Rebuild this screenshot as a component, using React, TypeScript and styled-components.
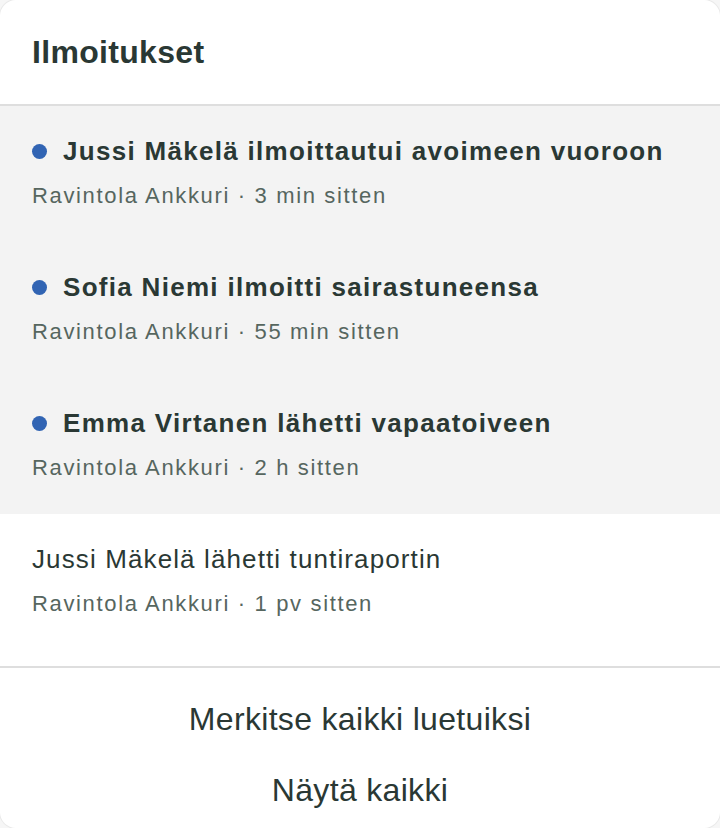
import styled, { createGlobalStyle } from "styled-components";

type Notice = {
  id: number;
  text: string;
  place: string;
  time: string;
  unread: boolean;
};

const notices: Notice[] = [
  {
    id: 1,
    text: "Jussi Mäkelä ilmoittautui avoimeen vuoroon",
    place: "Ravintola Ankkuri",
    time: "3 min sitten",
    unread: true,
  },
  {
    id: 2,
    text: "Sofia Niemi ilmoitti sairastuneensa",
    place: "Ravintola Ankkuri",
    time: "55 min sitten",
    unread: true,
  },
  {
    id: 3,
    text: "Emma Virtanen lähetti vapaatoiveen",
    place: "Ravintola Ankkuri",
    time: "2 h sitten",
    unread: true,
  },
  {
    id: 4,
    text: "Jussi Mäkelä lähetti tuntiraportin",
    place: "Ravintola Ankkuri",
    time: "1 pv sitten",
    unread: false,
  },
];

const GlobalStyle = createGlobalStyle`
  html, body {
    margin: 0;
    padding: 0;
    background: #f6f6f6;
  }
  body {
    font-family: "Liberation Sans", Arial, sans-serif;
  }
`;

function App() {
  return (
    <>
      <GlobalStyle />
      <Panel>
        <Header>
          <h2>Ilmoitukset</h2>
        </Header>
        <List>
          {notices.map(({ id, text, place, time, unread }) => (
            <Row key={id} $unread={unread}>
              <RowTitle $unread={unread}>
                {unread && <Dot />}
                <span>{text}</span>
              </RowTitle>
              <RowMeta>
                {place} · {time}
              </RowMeta>
            </Row>
          ))}
        </List>
        <Footer>
          <FooterButton>Merkitse kaikki luetuiksi</FooterButton>
          <FooterButton>Näytä kaikki</FooterButton>
        </Footer>
      </Panel>
    </>
  );
}

export default App;

const Panel = styled.section`
  width: 720px;
  height: 828px;
  box-sizing: border-box;
  display: flex;
  flex-direction: column;
  background: #ffffff;
  border-radius: 16px;
  box-shadow: 0 0 0 1px rgba(0, 0, 0, 0.05);
  overflow: hidden;
  color: #2a3834;
`;

const Header = styled.header`
  height: 106px;
  flex-shrink: 0;
  box-sizing: border-box;
  display: flex;
  align-items: center;
  padding: 0 32px;
  border-bottom: 2px solid #dedede;
  h2 {
    margin: 0;
    font-size: 32px;
    font-weight: 700;
    letter-spacing: 0.01em;
    color: #2a3834;
  }
`;

const List = styled.div`
  display: flex;
  flex-direction: column;
  padding-bottom: 16px;
  border-bottom: 2px solid #dedede;
`;

const Row = styled.div<{ $unread: boolean }>`
  display: flex;
  flex-direction: column;
  gap: 11px;
  padding: 28px 32px 29px;
  background: ${({ $unread }) => ($unread ? "#f3f3f3" : "#ffffff")};
`;

const RowTitle = styled.div<{ $unread: boolean }>`
  display: flex;
  align-items: center;
  gap: 16px;
  font-size: 26px;
  line-height: 34px;
  letter-spacing: ${({ $unread }) => ($unread ? "0.05em" : "0.043em")};
  font-weight: ${({ $unread }) => ($unread ? 700 : 400)};
  color: #2a3834;
`;

const Dot = styled.span`
  width: 15px;
  height: 15px;
  border-radius: 50%;
  background: #3164b3;
  flex-shrink: 0;
`;

const RowMeta = styled.div`
  font-size: 22px;
  line-height: 34px;
  letter-spacing: 0.075em;
  color: #56665f;
`;

const Footer = styled.footer`
  display: flex;
  flex-direction: column;
  padding-top: 16px;
`;

const FooterButton = styled.button`
  height: 71px;
  border: none;
  background: transparent;
  font-family: "Liberation Sans", Arial, sans-serif;
  font-size: 32px;
  letter-spacing: 0.01em;
  color: #2a3834;
  cursor: pointer;
  padding: 0;
  &:hover {
    background: #f6f6f6;
  }
`;
